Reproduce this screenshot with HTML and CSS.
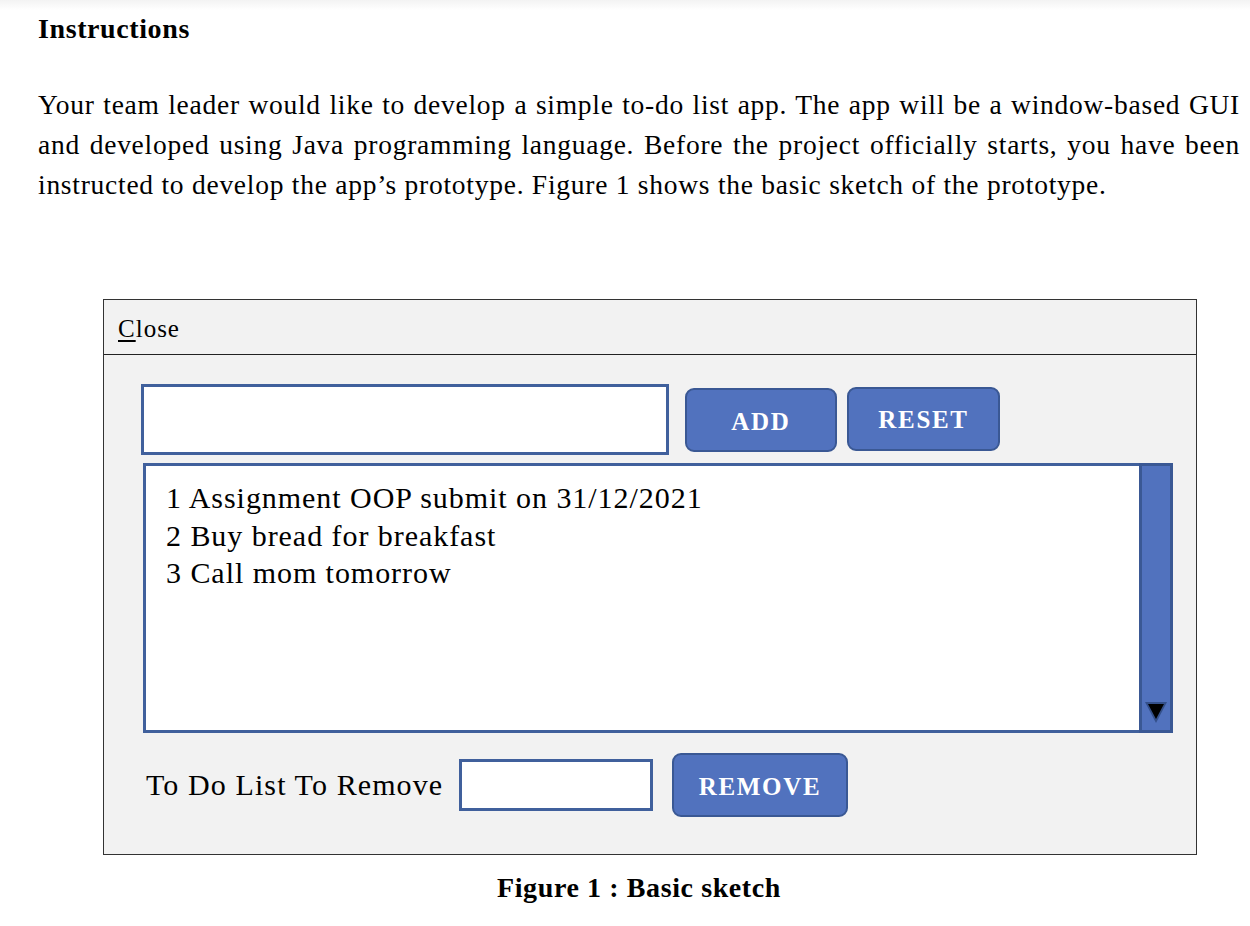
FILE: index.html
```html
<!DOCTYPE html>
<html lang="en">
<head>
<meta charset="utf-8">
<title>Instructions</title>
<link rel="stylesheet" href="styles.css">
</head>
<body>
<div class="topband"></div>
<main class="doc">
  <h1 class="title">Instructions</h1>
  <p class="para">
    <span class="line">Your team leader would like to develop a simple to-do list app. The app will be a window-based GUI</span>
    <span class="line">and developed using Java programming language. Before the project officially starts, you have been</span>
    <span class="line last">instructed to develop the app’s prototype. Figure 1 shows the basic sketch of the prototype.</span>
  </p>

  <div class="window">
    <div class="titlebar"><span class="close"><u>C</u>lose</span></div>
    <div class="winbody">
      <div class="row-add">
        <div class="field field-main"></div>
        <div class="btn btn-add">ADD</div>
        <div class="btn btn-reset">RESET</div>
      </div>
      <div class="list">
        <div class="list-items">
          <div>1 Assignment OOP submit on 31/12/2021</div>
          <div>2 Buy bread for breakfast</div>
          <div>3 Call mom tomorrow</div>
        </div>
        <div class="scrollbar">
          <svg class="arrow" width="24" height="24" viewBox="0 0 24 24"><polygon points="1,2 23,2 12,23" fill="#34508a"/><polygon points="4,4 20,4 12,19" fill="#000"/></svg>
        </div>
      </div>
      <div class="row-remove">
        <span class="label">To Do List To Remove</span>
        <div class="field field-small"></div>
        <div class="btn btn-remove">REMOVE</div>
      </div>
    </div>
  </div>
  <p class="caption">Figure 1 : Basic sketch</p>
</main>
</body>
</html>
```

FILE: styles.css
```css
html, body {
  margin: 0;
  padding: 0;
  background: #ffffff;
}
body {
  font-family: "Liberation Serif", "Times New Roman", serif;
  color: #000;
}
.topband {
  height: 10px;
  background: linear-gradient(#f3f3f3, #ffffff);
}
.doc {
  padding: 0 10px 0 38px;
}
.title {
  margin: 4px 0 0 0;
  font-size: 28px;
  line-height: 30px;
  font-weight: bold;
  letter-spacing: 0.6px;
}
.para {
  margin: 41px 0 0 0;
  font-size: 27.5px;
  line-height: 40px;
  letter-spacing: 0.74px;
}
.line {
  display: block;
  text-align: justify;
  text-align-last: justify;
}
.line.last {
  text-align: left;
  text-align-last: left;
}
.window {
  margin: 94px 0 0 65px;
  width: 1092px;
  height: 554px;
  border: 1px solid #333;
  background: #f2f2f2;
}
.titlebar {
  height: 54px;
  border-bottom: 1px solid #222;
  display: flex;
  align-items: center;
  padding-left: 14px;
}
.close {
  font-size: 25px;
  padding-top: 4px;
  letter-spacing: 1px;
}
.close u {
  text-decoration-thickness: 2px;
  text-underline-offset: 3px;
}
.winbody {
  padding: 29px 0 0 37px;
}
.row-add {
  display: flex;
  align-items: center;
}
.field {
  background: #fff;
  border: 3px solid #40609c;
  box-sizing: border-box;
}
.field-main {
  width: 528px;
  height: 71px;
}
.btn {
  box-sizing: border-box;
  background: #5172be;
  border: 2px solid #3a5894;
  border-radius: 9px;
  color: #fff;
  font-weight: bold;
  font-size: 25px;
  letter-spacing: 1.7px;
  display: flex;
  align-items: center;
  justify-content: center;
}
.btn-add {
  width: 152px;
  height: 64px;
  margin-left: 16px;
  padding-top: 4px;
}
.btn-reset {
  width: 153px;
  height: 64px;
  margin-left: 10px;
  margin-top: -2px;
  padding-top: 2px;
}
.list {
  margin: 8px 0 0 2px;
  width: 1030px;
  height: 270px;
  display: flex;
  box-sizing: border-box;
  border: 3px solid #40609c;
  background: #fff;
}
.list-items {
  flex: 1;
  padding: 13px 0 0 20px;
  font-size: 30px;
  line-height: 37.5px;
  letter-spacing: 0.95px;
}
.scrollbar {
  width: 34px;
  margin: -3px -3px -3px 0;
  box-sizing: border-box;
  background: #5172be;
  border: 3px solid #3a5894;
  display: flex;
  align-items: flex-end;
  justify-content: center;
  padding-bottom: 6px;
}
.row-remove {
  display: flex;
  align-items: center;
  margin-top: 20px;
  padding-left: 5px;
}
.label {
  font-size: 30px;
  width: 313px;
  letter-spacing: 1.1px;
}
.field-small {
  width: 194px;
  height: 52px;
}
.btn-remove {
  width: 176px;
  height: 64px;
  margin-left: 19px;
  padding-top: 4px;
}
.caption {
  margin: 17px 0 0 0;
  text-align: center;
  font-weight: bold;
  font-size: 28px;
  line-height: 32px;
  letter-spacing: 0.6px;
}
```
